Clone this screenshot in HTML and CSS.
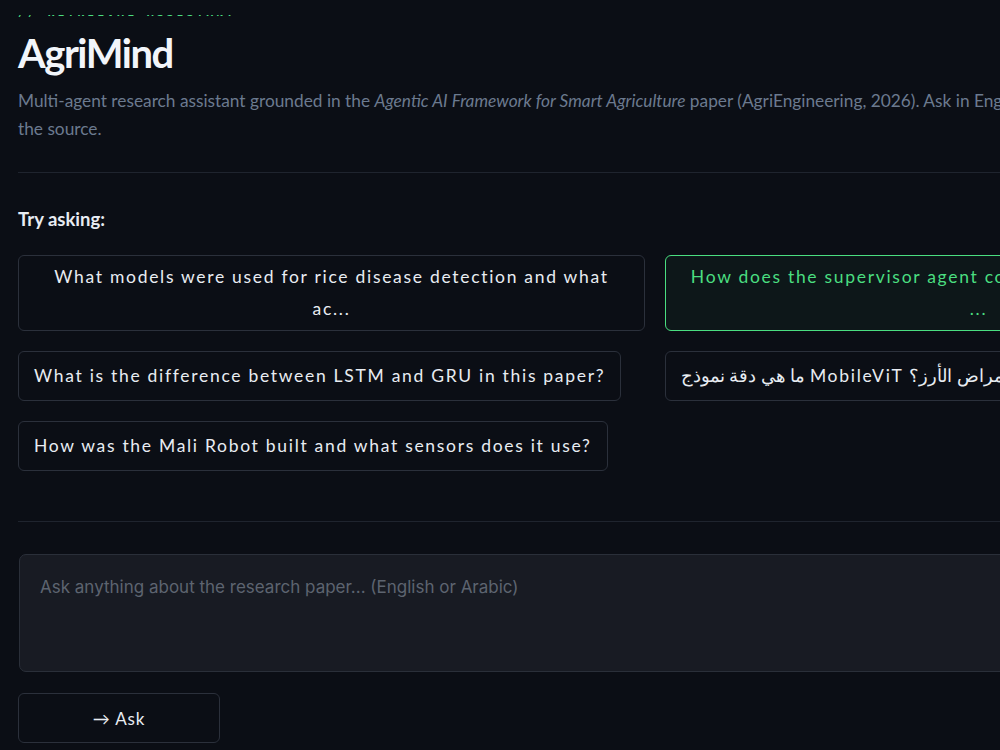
FILE: index.html
```html
<!DOCTYPE html>
<html lang="en">

<head>
    <meta charset="UTF-8">
    <meta name="viewport" content="width=device-width, initial-scale=1.0">
    <title>AgriMind</title>
    <link rel="stylesheet" href="styles.css">
</head>

<body>
    <header class="topbar"></header>
    <main class="page">
        <p class="eyebrow">// RETRIEVAL ASSISTANT</p>
        <h1 class="title">AgriMind</h1>
        <p class="lede">Multi-agent research assistant grounded in the <em>Agentic AI Framework for Smart Agriculture</em> paper (AgriEngineering, 2026). Ask in English or Arabic — every answer cites <span class="nowrap">the source.</span></p>
        <hr class="divider">
        <h2 class="try">Try asking:</h2>
        <div class="suggestions">
            <button class="chip">What models were used for rice disease detection and what ac...</button>
            <button class="chip active">How does the supervisor agent coordinate the other agents in ...</button>
            <button class="chip">What is the difference between LSTM and GRU in this paper?</button>
            <button class="chip" dir="ltr">ما هي دقة نموذج MobileViT في الكشف عن أمراض الأرز؟</button>
            <button class="chip">How was the Mali Robot built and what sensors does it use?</button>
        </div>
        <hr class="divider">
        <textarea class="askInput" placeholder="Ask anything about the research paper... (English or Arabic)"></textarea>
        <button class="askBtn">→ Ask</button>
    </main>
</body>

</html>
```

FILE: styles.css
```css
body {
    margin: 0;
    background-color: #0b0e15;
    color: #e8ecf2;
    font-family: Lato, "Noto Sans", sans-serif;
    overflow: hidden;
}

.topbar {
    position: fixed;
    top: 0;
    left: 0;
    right: 0;
    height: 15px;
    background-color: #0b0e15;
    z-index: 10;
}

.page {
    width: 1274px;
    padding: 6px 0 40px 18px;
}

.eyebrow {
    margin: 0;
    font-family: "DejaVu Sans Mono", monospace;
    font-size: 11px;
    font-weight: 700;
    line-height: 14px;
    letter-spacing: 3.3px;
    color: #4ade80;
}

.title {
    margin: 5px 0 0;
    font-size: 40px;
    line-height: 56px;
    font-weight: 700;
    letter-spacing: -1.5px;
    color: #f2f5fa;
}

.lede {
    margin: 6px 0 0;
    font-size: 17.3px;
    line-height: 28px;
    color: #6b7a8f;
}

.nowrap {
    white-space: nowrap;
}

.divider {
    margin: 29px 0 0;
    border: none;
    border-top: 1px solid #1f242e;
}

.try {
    margin: 30px 0 0;
    font-size: 18.5px;
    line-height: 32px;
    font-weight: 700;
    color: #e8ecf2;
}

.suggestions {
    display: grid;
    grid-template-columns: 1fr 1fr;
    gap: 20px 20px;
    justify-items: start;
    margin-top: 20px;
}

.chip {
    max-width: 100%;
    min-height: 50px;
    padding: 5px 15px;
    background-color: #0b0e15;
    border: 1px solid #2b303b;
    border-radius: 6px;
    color: #e8ecf2;
    font-family: Lato, "Noto Sans", sans-serif;
    font-size: 17.5px;
    line-height: 32px;
    letter-spacing: 1.7px;
    text-align: center;
}

.chip.active {
    border-color: #4ade80;
    background-color: #0d1719;
    color: #4ade80;
}

.suggestions + .divider {
    margin-top: 50px;
}

.askInput {
    display: block;
    box-sizing: border-box;
    width: 1274px;
    height: 118px;
    margin: 32px 0 0 1px;
    padding: 20px 20px;
    background-color: #181b23;
    border: 1px solid #2a2f39;
    border-radius: 7px;
    color: #e8ecf2;
    font-family: Inter, sans-serif;
    font-size: 17px;
    line-height: 24px;
    resize: none;
}

.askInput::placeholder {
    color: #5d6470;
}

.askBtn {
    display: block;
    width: 202px;
    height: 50px;
    margin-top: 21px;
    background-color: #0b0e15;
    border: 1px solid #2b303b;
    border-radius: 6px;
    color: #e8ecf2;
    font-family: Lato, "Noto Sans", sans-serif;
    font-size: 17px;
    letter-spacing: 0.8px;
}
```
